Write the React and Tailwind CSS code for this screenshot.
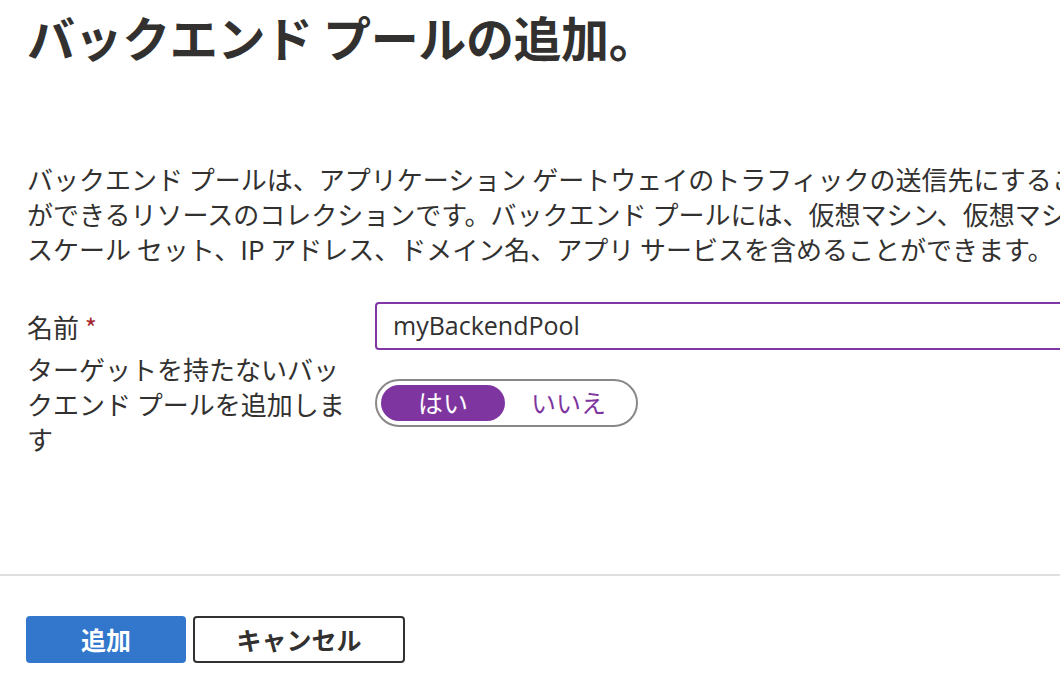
import React from "react";

const jp = {
  fontFamily: '"Noto Sans CJK JP", "Noto Sans", sans-serif'
};

export default function App() {
  return (
    <div
      className="w-[1060px] h-[698px] overflow-hidden bg-white text-[#323130]"
      style={jp}
    >
      <h1 className="pl-[27px] pt-[6px] text-[48px] font-bold leading-[60px] whitespace-nowrap tracking-[-0.4px]">
        バックエンド プールの追加。
      </h1>

      <p className="pl-[27px] mt-[95px] text-[26px] leading-[35px] whitespace-nowrap">
        バックエンド プールは、アプリケーション ゲートウェイのトラフィックの送信先にすること
        <br />
        ができるリソースのコレクションです。バックエンド プールには、仮想マシン、仮想マシン
        <br />
        スケール セット、IP アドレス、ドメイン名、アプリ サービスを含めることができます。
      </p>

      <div className="mt-[36px] flex flex-col gap-[1px]">
        {/* 名前 */}
        <div className="flex items-center">
          <div className="w-[375px] shrink-0 pl-[27px] text-[26px] leading-[35px]">
            名前 <span className="text-[#a4262c]">*</span>
          </div>
          <div className="flex-1 h-[48px] min-w-[700px] border-2 border-[#8036a4] rounded-[4px] flex items-center pl-[16px]">
            <span
              className="text-[25px] text-[#323130]"
              style={{ fontFamily: '"Open Sans", "Noto Sans", sans-serif' }}
            >
              myBackendPool
            </span>
          </div>
        </div>

        {/* ターゲットを持たない */}
        <div className="flex items-start">
          <div className="w-[375px] shrink-0 pl-[27px] pr-[26px] text-[26px] leading-[35px]">
            ターゲットを持たないバックエンド プールを追加します
          </div>
          <div className="mt-[28px] w-[263px] h-[48px] rounded-full border-2 border-[#8a8886] flex items-center px-[4px]">
            <div className="w-[124px] h-[36px] rounded-full bg-[#7f35a0] text-white text-[25px] flex items-center justify-center">
              はい
            </div>
            <div className="flex-1 text-[#7f35a0] text-[25px] flex items-center justify-center">
              いいえ
            </div>
          </div>
        </div>
      </div>

      <div className="mt-[118px] h-[2px] bg-[#e1dfdd]" />

      <div className="mt-[40px] pl-[26px] flex gap-[7px]">
        <button className="w-[160px] h-[47px] rounded-[4px] bg-[#3277cc] text-white text-[25px] font-bold flex items-center justify-center">
          追加
        </button>
        <button className="w-[212px] h-[47px] rounded-[4px] border-2 border-[#323130] bg-white text-[#323130] text-[25px] font-bold flex items-center justify-center">
          キャンセル
        </button>
      </div>
    </div>
  );
}
